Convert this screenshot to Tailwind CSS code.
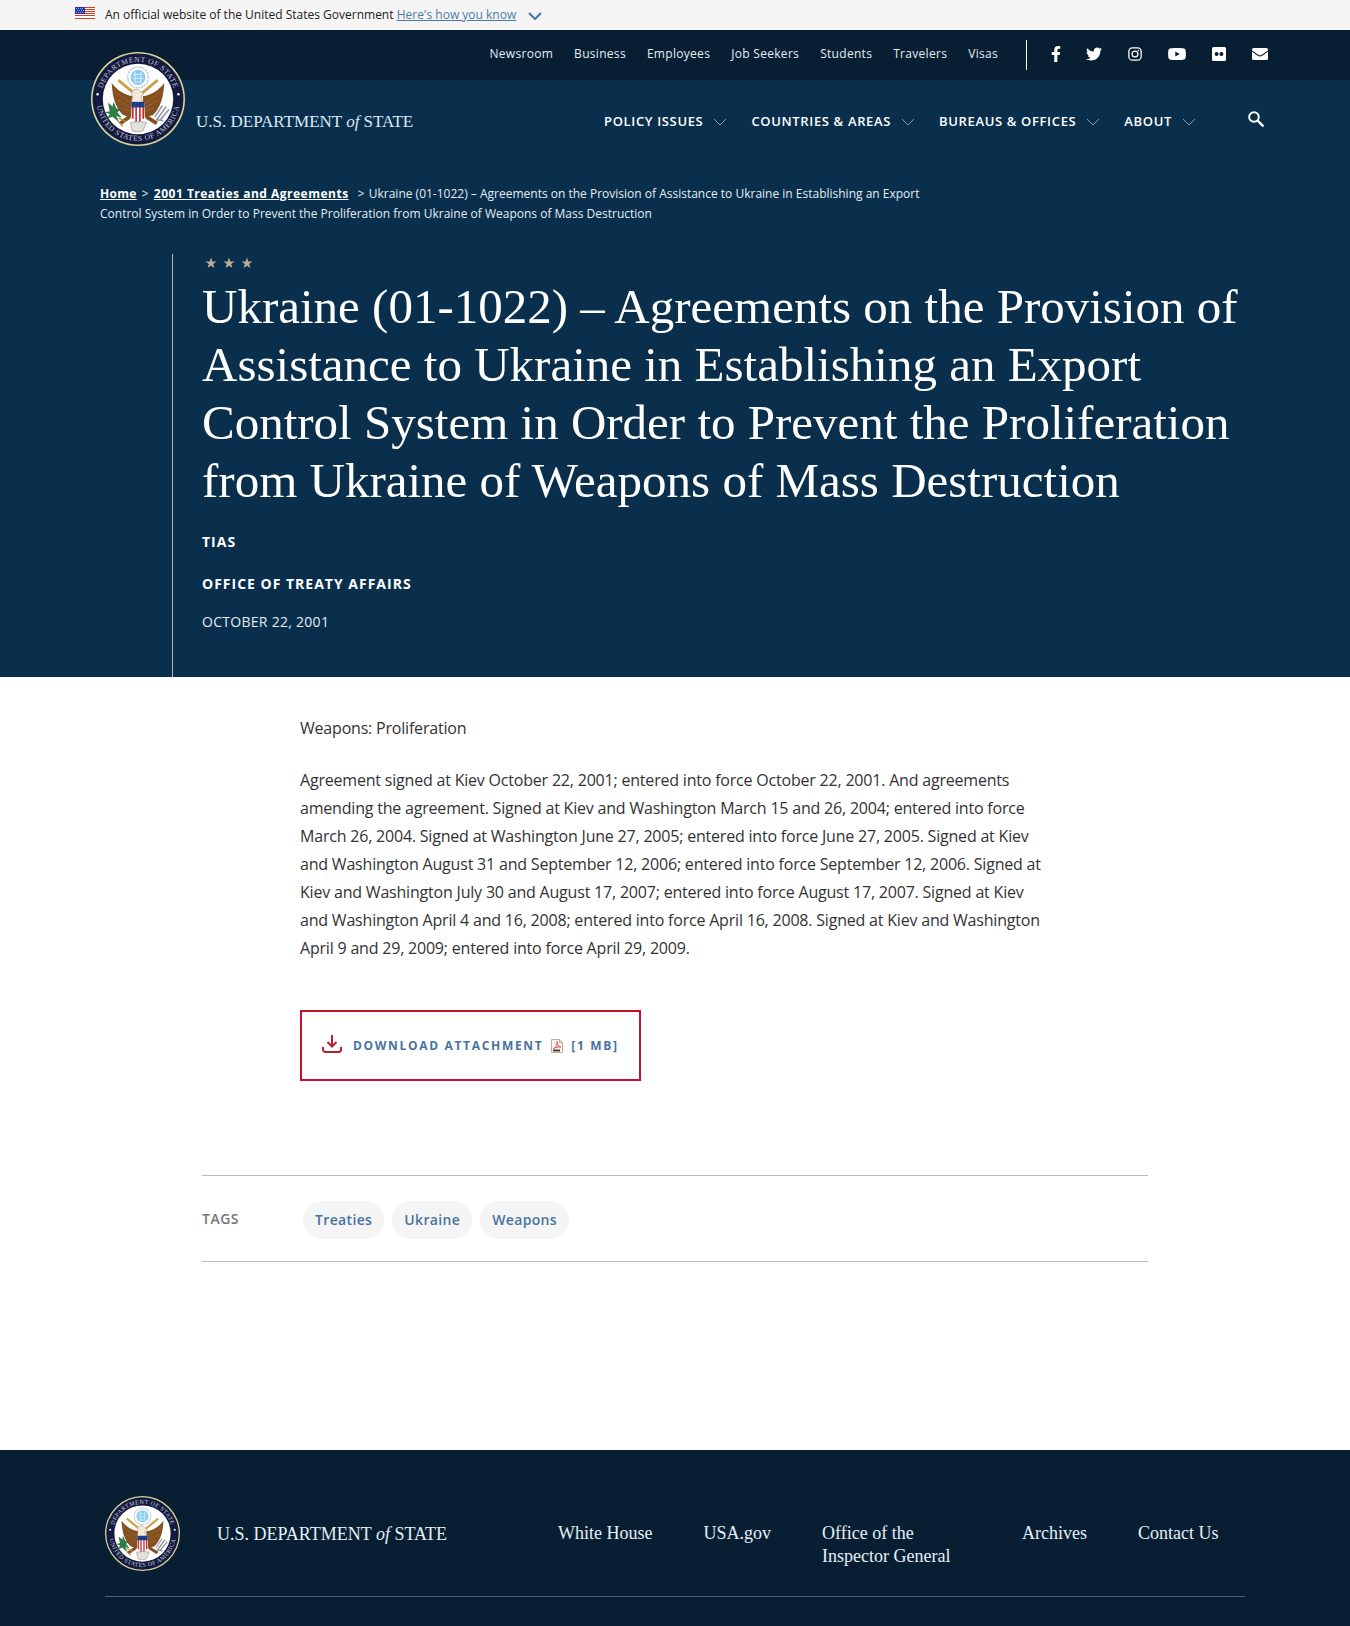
<!DOCTYPE html>
<html lang="en">
<head>
<meta charset="utf-8">
<meta name="viewport" content="width=device-width, initial-scale=1">
<title>Ukraine (01-1022) - United States Department of State</title>
<script src="https://cdn.jsdelivr.net/npm/@tailwindcss/browser@4"></script>
</head>
<body class="min-h-screen bg-white font-['Open_Sans',sans-serif] text-[#333]">

<!-- Shared symbols -->
<svg class="absolute size-0" aria-hidden="true">
  <defs>
    <path id="ring-top" d="M10.500 50a39.500 39.500 0 0 1 79 0"/>
    <path id="ring-bottom" d="M5.500 50a44.500 44.500 0 0 0 89 0"/>
    <symbol id="seal" viewBox="0 0 100 100">
      <circle cx="50" cy="50" r="50" fill="#d9d49a"/>
      <circle cx="50" cy="50" r="48.300" fill="#14193f"/>
      <circle cx="50" cy="50" r="37.500" fill="#fff"/>
      <g fill="#c3cad9" font-family="'Liberation Serif',serif" font-size="8" letter-spacing=".6">
        <text text-anchor="middle"><textPath href="#ring-top" startOffset="50%">DEPARTMENT OF STATE</textPath></text>
        <text text-anchor="middle"><textPath href="#ring-bottom" startOffset="50%">UNITED STATES OF AMERICA</textPath></text>
      </g>
      <circle cx="7" cy="45" r="1.300" fill="#fff"/><circle cx="93" cy="45" r="1.300" fill="#fff"/>
      <circle cx="50" cy="27" r="11" fill="#fff" stroke="#b9c4cd" stroke-width="1.500" stroke-dasharray="2 1"/>
      <circle cx="50" cy="27" r="8" fill="#8ccbee"/>
      <path d="M45 24h10M44 28h12M46 32h8M47 21v12M53 21v12" stroke="#d5effc" stroke-width="1"/>
      <path d="M29 30l17 14M71 30L54 44" stroke="#c9a24a" stroke-width="3"/>
      <path d="M22 33c1 14 3 25 12 34l9 3 2-23c-9-1-17-6-23-14zM78 33c-1 14-3 25-12 34l-9 3-2-23c9-1 17-6 23-14z" fill="#84501f"/>
      <path d="M25 42l17 12M28 51l14 8M33 60l10 3M75 42L58 54M72 51l-14 8M67 60l-10 3" stroke="#9c6530" stroke-width="1"/>
      <path d="M43 44c1-5 7-6 9-2l4 2-3 4 2 6H43l1-6z" fill="#f1ead9" stroke="#b08a55" stroke-width=".7"/>
      <path d="M41 69L31 76M59 69l11 7" stroke="#84501f" stroke-width="4"/>
      <path d="M43 54h14v14c0 4-4 6-7 7-3-1-7-3-7-7z" fill="#fff"/>
      <path d="M44.500 58v13M48 58v16.500M52 58v16.500M55.500 58v13" stroke="#c2262f" stroke-width="1.700"/>
      <path d="M43 53h14v6H43z" fill="#1d3f87"/>
      <path d="M42 75l8-1 9 1-4 9-5 1-6-1z" fill="#e3e1dd" stroke="#a29b90" stroke-width=".8"/>
      <path d="M18 54l5 4 1-5 3 7 5 1-4 3 5 6-6-2 3 7-7-6-6 2 3-5-6-2 6-1z" fill="#2e7d46"/>
      <path d="M29 70l8 4M29 74l5 5" stroke="#b78b3d" stroke-width="1.500"/>
      <path d="M70 72l10-14M73 73l10-12M68 69l8-12M69 72l8 1" stroke="#9a9da3" stroke-width="1.800"/>
    </symbol>
    <symbol id="chevron" viewBox="0 0 14 8"><path d="M1 1l6 6 6-6" fill="none" stroke="currentColor"/></symbol>
    <symbol id="star" viewBox="0 0 24 24"><path d="M12 1l2.700 8h8.300l-6.700 5 2.600 8.200L12 17.300 5.100 22.200 7.700 14 1 9h8.300z" fill="currentColor"/></symbol>
  </defs>
</svg>

<!-- Government banner -->
<div class="flex h-[30px] items-center bg-[#f5f5f5] px-[75px] text-xs text-[#212121]">
  <svg class="mb-1 mr-2.5 h-3 w-5" viewBox="0 0 20 12" aria-hidden="true">
    <path fill="#fff" d="M0 0h20v12H0z"/>
    <path stroke="#db3e1f" stroke-width="1" d="M0 .5h20M0 2.500h20M0 4.500h20M0 6.500h20M0 8.500h20M0 11.500h20"/>
    <path fill="#1e33b1" d="M0 0h10v7H0z"/>
    <path stroke="#9fb0ee" stroke-dasharray="1 1" d="M1 1.500h8M2 3.500h7M1 5.500h8"/>
  </svg>
  <p>An official website of the United States Government <button type="button" class="text-[#4d7aa5] underline">Here's how you know</button></p>
  <svg class="ml-3 mt-0.5 h-2 w-3.5 text-[#4773aa]" aria-hidden="true" viewBox="0 0 14 8"><path d="M1 1l6 6 6-6" fill="none" stroke="currentColor" stroke-width="2"/></svg>
</div>

<header class="relative text-white">
  <!-- Utility bar -->
  <div class="flex h-[50px] items-center justify-end bg-[#081f33] pr-[82px]">
    <nav aria-label="Utility" class="pb-0.5">
      <ul class="flex gap-[21px] text-xs tracking-wide text-[#e3edf4]">
        <li><a href="#">Newsroom</a></li>
        <li><a href="#">Business</a></li>
        <li><a href="#">Employees</a></li>
        <li><a href="#">Job Seekers</a></li>
        <li><a href="#">Students</a></li>
        <li><a href="#">Travelers</a></li>
        <li><a href="#">Visas</a></li>
      </ul>
    </nav>
    <ul class="ml-7 flex h-[30px] items-center gap-[25px] border-l border-white pb-0.5 pl-6">
      <li><a href="#" aria-label="Facebook"><svg class="h-4 w-[10px]" viewBox="0 0 320 512" fill="currentColor"><path d="M279 288l14-93h-89v-60c0-25 12-50 52-50h41V7s-37-7-72-7c-73 0-121 44-121 125v70H23v93h81v224h100V288z"/></svg></a></li>
      <li><a href="#" aria-label="Twitter"><svg class="size-4" viewBox="0 0 512 512" fill="currentColor"><path d="M459 152c0 4 0 9 0 14 0 138-105 298-298 298-59 0-115-17-161-47 8 1 16 1 25 1 49 0 94-16 130-45-46-1-85-31-98-72 7 1 13 1 20 1 9 0 19-1 28-3-48-10-84-52-84-103v-1c14 8 30 13 47 13-28-19-46-51-46-87 0-19 5-37 14-53 52 64 129 105 216 110-2-8-3-16-3-24 0-58 47-105 105-105 30 0 57 13 77 33 24-5 46-13 66-25-8 24-24 45-46 58 21-2 42-8 60-16-14 21-32 39-52 53z"/></svg></a></li>
      <li><a href="#" aria-label="Instagram"><svg class="mx-px size-[14px]" viewBox="0 0 24 24" fill="none" stroke="currentColor" stroke-width="2.200"><rect x="1.500" y="1.500" width="21" height="21" rx="6"/><circle cx="12" cy="12" r="5"/><circle cx="18" cy="6" r="1.200" fill="currentColor" stroke="none"/></svg></a></li>
      <li><a href="#" aria-label="YouTube"><svg class="h-3 w-[18px]" viewBox="0 0 18 12"><path fill="currentColor" d="M3 .3c3-.4 9-.4 12 0 1.800.2 2.500 1 2.700 2.700.2 2 .2 4 0 6-.2 1.700-.9 2.500-2.700 2.700-3 .4-9 .4-12 0C1.200 11.500.5 10.700.3 9c-.2-2-.2-4 0-6C.5 1.300 1.200.5 3 .3z"/><path fill="#081f33" d="M7.300 3.500v5l4.400-2.500z"/></svg></a></li>
      <li><a href="#" aria-label="Flickr"><svg class="mx-px size-[14px]" viewBox="0 0 14 14"><rect width="14" height="14" rx="1.500" fill="currentColor"/><circle cx="4.600" cy="7" r="2" fill="#081f33"/><circle cx="9.400" cy="7" r="2" fill="#081f33"/></svg></a></li>
      <li><a href="#" aria-label="Email"><svg class="h-3 w-4" viewBox="0 0 16 12" fill="currentColor"><path d="M1.500 0h13A1.500 1.500 0 0 1 16 1.500v.7C13 4.500 10 7.200 8 7.200S3 4.500 0 2.200v-.7A1.500 1.500 0 0 1 1.500 0zM0 3.600c3 2.300 5.500 4.900 8 4.900s5-2.600 8-4.900v6.900a1.500 1.500 0 0 1-1.500 1.500h-13A1.500 1.500 0 0 1 0 10.500z"/></svg></a></li>
    </ul>
  </div>

  <!-- Primary navigation -->
  <div class="flex h-[83px] items-center justify-between bg-[#0a2f4c] pl-[196px] pr-[86px]">
    <a href="#" class="whitespace-nowrap font-['Liberation_Serif',serif] text-[17px] text-[#dcebf5]">U.S. DEPARTMENT <i>of</i> STATE</a>
    <div class="flex items-center">
      <nav aria-label="Primary">
        <ul class="flex gap-6 text-[13px] font-semibold tracking-wider">
          <li><button type="button" class="flex items-center gap-2.5 whitespace-nowrap">POLICY ISSUES<svg class="h-2 w-3.5 text-[#7d9db8]" aria-hidden="true"><use href="#chevron"/></svg></button></li>
          <li><button type="button" class="flex items-center gap-2.5 whitespace-nowrap">COUNTRIES &amp; AREAS<svg class="h-2 w-3.5 text-[#7d9db8]" aria-hidden="true"><use href="#chevron"/></svg></button></li>
          <li><button type="button" class="flex items-center gap-2.5 whitespace-nowrap">BUREAUS &amp; OFFICES<svg class="h-2 w-3.5 text-[#7d9db8]" aria-hidden="true"><use href="#chevron"/></svg></button></li>
          <li><button type="button" class="flex items-center gap-2.5 whitespace-nowrap">ABOUT<svg class="h-2 w-3.5 text-[#7d9db8]" aria-hidden="true"><use href="#chevron"/></svg></button></li>
        </ul>
      </nav>
      <button type="button" aria-label="Search" class="mb-1.5 ml-[52px]"><svg class="size-4" viewBox="0 0 16 16" fill="none" stroke="currentColor" stroke-width="2"><circle cx="6" cy="6" r="4.800"/><path d="M9.500 9.500l6 6" stroke-width="2.400"/></svg></button>
    </div>
  </div>

  <!-- The seal straddles both bars -->
  <a href="#" aria-label="Home" class="absolute left-[91px] top-[22px]"><svg class="size-[94px]"><use href="#seal"/></svg></a>
</header>

<main>
  <section class="bg-[#0a2f4c] pt-[21px] text-white">
    <nav aria-label="Breadcrumb" class="ml-[100px] max-w-[850px] text-xs leading-5 text-[#e3edf4]">
      <a href="#" class="font-bold tracking-wide text-white underline">Home</a> <span class="mx-0.5">&gt;</span>
      <a href="#" class="mr-1.5 font-bold tracking-[0.5px] text-white underline">2001 Treaties and Agreements</a> <span class="mr-px">&gt;</span>
      Ukraine (01-1022) – Agreements on the Provision of Assistance to Ukraine in Establishing an Export Control System in Order to Prevent the Proliferation from Ukraine of Weapons of Mass Destruction
    </nav>
    <div class="ml-[172px] mr-20 mt-[30px] border-l border-[#b5b5ab] pb-[45px] pl-[29px]">
      <div class="flex gap-1.5 px-[3px] pb-px pt-[3px] text-[#bdaa94]" aria-hidden="true">
        <svg class="size-3"><use href="#star"/></svg>
        <svg class="size-3"><use href="#star"/></svg>
        <svg class="size-3"><use href="#star"/></svg>
      </div>
      <h1 class="mt-2 font-['Liberation_Serif',serif] text-[49px] leading-[58px]">Ukraine (01-1022) – Agreements on the Provision of<br>Assistance to Ukraine in Establishing an Export<br>Control System in Order to Prevent the Proliferation<br>from Ukraine of Weapons of Mass Destruction</h1>
      <p class="mt-[22px] text-sm font-bold tracking-[1px]">TIAS</p>
      <p class="mt-[22px] text-sm font-bold tracking-[1px]">OFFICE OF TREATY AFFAIRS</p>
      <p class="mt-[18px] text-sm tracking-[0.02em] text-[#e3edf4]">OCTOBER 22, 2001</p>
    </div>
  </section>

  <article class="mx-[202px] text-base leading-7">
    <div class="ml-[98px] max-w-[745px] pt-[37px] tracking-[-0.2px]">
      <p>Weapons: Proliferation</p>
      <p class="mt-6">Agreement signed at Kiev October 22, 2001; entered into force October 22, 2001. And agreements amending the agreement. Signed at Kiev and Washington March 15 and 26, 2004; entered into force March 26, 2004. Signed at Washington June 27, 2005; entered into force June 27, 2005. Signed at Kiev and Washington August 31 and September 12, 2006; entered into force September 12, 2006. Signed at Kiev and Washington July 30 and August 17, 2007; entered into force August 17, 2007. Signed at Kiev and Washington April 4 and 16, 2008; entered into force April 16, 2008. Signed at Kiev and Washington April 9 and 29, 2009; entered into force April 29, 2009.</p>
    </div>
    <a href="#" class="ml-[98px] mt-12 inline-flex h-[71px] items-center border-2 border-[#c4122f] px-5 text-xs font-bold tracking-[0.14em] text-[#4773a0]">
      <svg class="mb-1 mr-[11px] h-[18px] w-5" viewBox="0 0 20 18" fill="none" stroke="#b5202f" stroke-width="2" aria-hidden="true"><path d="M10 0v11M5.500 7l4.500 4.500L14.500 7M1 12v2.500A2.500 2.500 0 0 0 3.500 17h13a2.500 2.500 0 0 0 2.500-2.500V12"/></svg>
      DOWNLOAD ATTACHMENT
      <svg class="mx-2 h-3.5 w-3" viewBox="0 0 12 14" fill="none" aria-hidden="true"><path d="M.5.5h8l3 3v10H.5z" fill="#fdf3f0" stroke="#c9a8a0"/><path d="M8.500.5v3h3" stroke="#c9a8a0"/><path d="M2.500 9.500c3-1 4-4 3.500-7 0 3 1 5 4 5.500-3-.5-5 .5-7.500 1.500z" stroke="#e05a4a"/><path d="M2 11.500h7" stroke="#444" stroke-width="2"/></svg>
      [1 MB]
    </a>

    <section class="mt-[94px] flex items-center border-y border-[#bdbdbd] pb-[22px] pt-[25px]" aria-label="Tags">
      <h2 class="w-[101px] pb-0.5 text-sm font-semibold leading-5 tracking-[0.5px] text-[#757575]">TAGS</h2>
      <ul class="flex gap-2 text-sm font-semibold tracking-wide text-[#4773a0]">
        <li><a href="#" class="flex h-[38px] items-center rounded-full bg-[#f5f5f5] px-3">Treaties</a></li>
        <li><a href="#" class="flex h-[38px] items-center rounded-full bg-[#f5f5f5] px-3">Ukraine</a></li>
        <li><a href="#" class="flex h-[38px] items-center rounded-full bg-[#f5f5f5] px-3">Weapons</a></li>
      </ul>
    </section>
  </article>
</main>

<footer class="mt-[188px] bg-[#081f33] px-[105px] pb-[29px] pt-[46px] font-['Liberation_Serif',serif] text-[#e6f0f7]">
  <div class="flex items-start border-b border-[#4b6478] pb-[25px]">
    <svg class="size-[75px]" role="img" aria-label="Department of State seal"><use href="#seal"/></svg>
    <a href="#" class="ml-[37px] mt-[26px] w-[341px] whitespace-nowrap text-lg leading-6">U.S. DEPARTMENT <i>of</i> STATE</a>
    <nav aria-label="Footer" class="mt-[26px]">
      <ul class="flex gap-[51px] text-lg leading-[23px]">
        <li class="whitespace-nowrap"><a href="#">White House</a></li>
        <li><a href="#">USA.gov</a></li>
        <li class="w-[149px]"><a href="#">Office of the Inspector General</a></li>
        <li><a href="#">Archives</a></li>
        <li class="whitespace-nowrap"><a href="#">Contact Us</a></li>
      </ul>
    </nav>
  </div>
</footer>
</body>
</html>
